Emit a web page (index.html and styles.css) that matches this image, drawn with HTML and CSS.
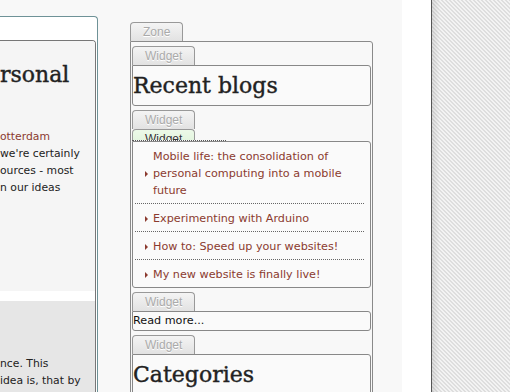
FILE: index.html
```html
<!DOCTYPE html>
<html lang="en">
<head>
    <meta charset="UTF-8">
    <title>Recent blogs - layout</title>
    <link rel="stylesheet" href="styles.css">
</head>
<body>
    <div class="page">
        <div class="site">
            <div class="article-frame">
                <div class="article">
                    <div class="article-body">
                        <h1 class="post-title">rsonal</h1>
                        <div class="post-meta"><a href="#">otterdam</a></div>
                        <p class="post-text">we're certainly<br>ources - most<br>n our ideas</p>
                    </div>
                    <div class="article-next">
                        <p class="post-text">nce. This<br>idea is, that by</p>
                    </div>
                </div>
            </div>

            <div class="sidebar">
                <div class="tab">Zone</div>
                <div class="zone-box">
                    <div class="widget">
                        <div class="tab">Widget</div>
                        <div class="widget-box">
                            <h2 class="widget-title">Recent blogs</h2>
                        </div>
                    </div>

                    <div class="widget">
                        <div class="tab">Widget</div>
                        <div class="ghost">
                            <div class="tab tab-drag">Widget</div>
                        </div>
                        <div class="widget-box">
                            <ul class="blog-list">
                                <li><a href="#">Mobile life: the consolidation of personal computing into a mobile future</a></li>
                                <li><a href="#">Experimenting with Arduino</a></li>
                                <li><a href="#">How to: Speed up your websites!</a></li>
                                <li><a href="#">My new website is finally live!</a></li>
                            </ul>
                        </div>
                    </div>

                    <div class="widget">
                        <div class="tab">Widget</div>
                        <div class="widget-box">
                            <div class="widget-text">Read more...</div>
                        </div>
                    </div>

                    <div class="widget">
                        <div class="tab">Widget</div>
                        <div class="widget-box">
                            <h2 class="widget-title">Categories</h2>
                        </div>
                    </div>
                </div>
            </div>
        </div>

        <div class="gutter"></div>
        <div class="desk"></div>
    </div>
</body>
</html>
```

FILE: styles.css
```css
body {
    margin: 0;
    font-family: "DejaVu Sans", Verdana, sans-serif;
    background-color: #f8f8f8;
    overflow: hidden;
}
a {
    color: #8b3a2f;
    text-decoration: none;
}
.page {
    display: flex;
    height: 392px;
    overflow: hidden;
}
.site {
    width: 402px;
    display: flex;
    align-items: flex-start;
    background-color: #f8f8f8;
}

/* left: the article, cut off by the window */
.article-frame {
    width: 97px;
    height: 420px;
    margin-top: 16px;
    padding-top: 23px;
    background-color: #fff;
    border-top: 1px solid #6e9297;
    border-right: 1px solid #6e9297;
    border-top-right-radius: 4px;
}
.article {
    width: 95px;
    height: 400px;
    background-color: #fff;
    border-top: 1px solid #777;
    border-right: 1px solid #777;
    border-top-right-radius: 4px;
    overflow: hidden;
    white-space: nowrap;
}
.article-body {
    background-color: #f5f5f5;
    padding: 16px 0 95px;
}
.post-title {
    margin: 0 0 35px;
    font-family: "DejaVu Serif", serif;
    font-size: 22px;
    font-weight: normal;
    line-height: 36px;
    color: #222;
    -webkit-text-stroke: 0.4px #222;
}
.post-meta,
.post-text {
    margin: 0;
    font-size: 10.8px;
    line-height: 17px;
    color: #222;
}
.article-next {
    margin-top: 10px;
    height: 200px;
    padding-top: 54px;
    background-color: #e6e6e6;
}

/* right: zone with its widgets */
.sidebar {
    width: 243px;
    margin-left: 32px;
    padding-top: 22px;
}
.tab {
    width: max-content;
    height: 18px;
    padding: 0 12px;
    line-height: 18px;
    font-family: "Liberation Sans", Arial, sans-serif;
    font-size: 12px;
    color: #aaa;
    text-shadow: 0 1px 0 #fff;
    background: linear-gradient(#f4f4f4, #e2e2e2);
    border: 1px solid #999;
    border-bottom: none;
    border-radius: 4px 4px 0 0;
}
.zone-box {
    height: 400px;
    padding: 4px 1px 0;
    border: 1px solid #8a8a8a;
    border-radius: 0 3px 3px 3px;
}
.widget {
    margin-bottom: 4px;
}
.widget-box {
    background-color: #fafafa;
    border: 1px solid #888;
    border-radius: 0 3px 3px 3px;
}
.widget-title {
    margin: 0;
    padding: 2px 0 1px;
    font-family: "DejaVu Serif", serif;
    font-size: 22px;
    font-weight: normal;
    line-height: 36px;
    color: #222;
    -webkit-text-stroke: 0.4px #222;
}
.widget-text {
    font-size: 11.2px;
    line-height: 18px;
    color: #111;
}
.ghost {
    width: 94px;
    height: 11px;
    overflow: hidden;
    border-bottom: 1px dotted #555;
}
.tab-drag {
    color: #333;
    background: linear-gradient(#ecf9e8, #ddf1d8);
}
.blog-list {
    list-style: none;
    margin: 0 6px 0 2px;
    padding: 0;
}
.blog-list li {
    display: flex;
    align-items: center;
    padding: 6px 0 4px 10px;
    font-size: 11.2px;
    line-height: 17px;
    border-bottom: 1px dotted #666;
}
.blog-list li:last-child {
    border-bottom: none;
}
.blog-list li::before {
    content: "";
    flex: none;
    margin-right: 5px;
    border-left: 3px solid #8b3a2f;
    border-top: 3px solid transparent;
    border-bottom: 3px solid transparent;
}

/* the white strip and the desk behind the page */
.gutter {
    width: 29px;
    background-color: #fff;
}
.desk {
    flex: 1;
    border-left: 1px solid #555;
    background-color: #f3f3f3;
    background-image:
        linear-gradient(to right, rgba(0, 0, 0, 0.1), rgba(0, 0, 0, 0) 8px),
        linear-gradient(45deg, #dedede 25%, transparent 25%, transparent 50%, #dedede 50%, #dedede 75%, transparent 75%);
    background-size: auto, 4px 4px;
}
```
